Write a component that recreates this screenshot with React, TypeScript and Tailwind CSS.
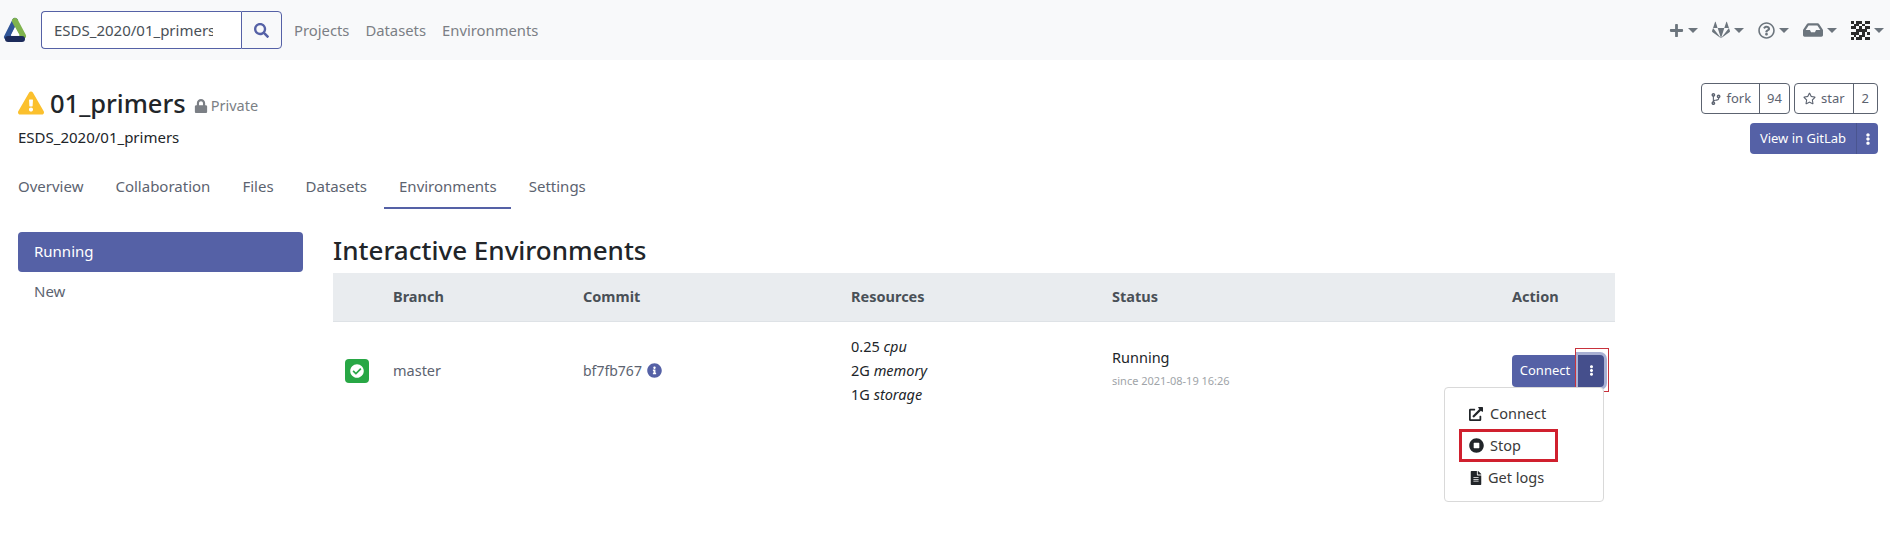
import React from 'react';
import {
  FaSearch, FaLock, FaExclamationTriangle, FaCodeBranch, FaRegStar, FaEllipsisV, FaCheckCircle,
  FaInfoCircle, FaExternalLinkAlt, FaStopCircle, FaFileAlt, FaPlus, FaGitlab, FaRegQuestionCircle, FaInbox,
} from 'react-icons/fa';

const Caret = () => (
  <span className="ml-[4px] inline-block h-0 w-0 border-x-[5px] border-t-[5px] border-x-transparent border-t-[#6c757d]" />
);

const Logo = () => (
  <svg width="24" height="28" viewBox="0 0 24 28" fill="none" strokeLinecap="round" strokeWidth="6">
    <path d="M12 5 L4 21" stroke="#2f5597" />
    <path d="M12 5 L20 20" stroke="#7fb34d" />
    <path d="M5 23 L19 23" stroke="#1c2b5a" />
    <path d="M12 11 L16.5 19 L8 19 Z" fill="#ffffff" strokeWidth="0" />
  </svg>
);

const Identicon = () => {
  const cells = ['1011011', '0110100', '1101011', '0011110', '1110101', '0101100', '1011011'];
  return (
    <svg width="19" height="19" viewBox="0 0 7 7" shapeRendering="crispEdges">
      {cells.map((row, y) =>
        row.split('').map((c, x) => c === '1' && <rect key={`${x}-${y}`} x={x} y={y} width="1" height="1" fill="#2b2b2b" />)
      )}
    </svg>
  );
};

const tabs = ['Overview', 'Collaboration', 'Files', 'Datasets', 'Environments', 'Settings'];

export default function App() {
  return (
    <div className="h-[544px] w-[1890px] overflow-hidden bg-white font-['Noto_Sans',sans-serif] text-[15px] text-[#212529]">
      <nav className="flex h-[60px] items-center bg-[#f8f9fa] pl-[3px] pr-[6px]">
        <Logo />
        <div className="ml-[14px] flex h-[38px] w-[200px] items-center overflow-hidden rounded-l-[4px] border border-r-0 border-[#5561a6] bg-white pl-[12px] text-[#495057]">
          <span className="w-[159px] overflow-hidden whitespace-nowrap">ESDS_2020/01_primers</span>
        </div>
        <div className="flex h-[38px] w-[41px] items-center justify-center rounded-r-[4px] border border-[#5561a6] text-[#5561a6]">
          <FaSearch size={15} />
        </div>
        <div className="ml-[12px] flex gap-[16px] text-[14.8px] text-[#7b7f85]">
          <span>Projects</span>
          <span>Datasets</span>
          <span>Environments</span>
        </div>
        <div className="ml-auto flex items-center gap-[14px] text-[#6c757d]">
          <span className="flex items-center"><FaPlus size={15} /><Caret /></span>
          <span className="flex items-center"><FaGitlab size={18} /><Caret /></span>
          <span className="flex items-center"><FaRegQuestionCircle size={17} /><Caret /></span>
          <span className="flex items-center"><FaInbox size={20} /><Caret /></span>
          <span className="flex items-center"><Identicon /><Caret /></span>
        </div>
      </nav>

      <header className="flex justify-between pl-[18px] pr-[12px] pt-[25px]">
        <div>
          <div className="flex items-center">
            <FaExclamationTriangle size={26} className="text-[#fbc02d]" />
            <h1 className="ml-[6px] text-[25.5px] leading-[36px] font-medium">01_primers</h1>
            <FaLock size={14} className="ml-[8px] mt-[6px] text-[#7b7f85]" />
            <span className="ml-[3px] mt-[6px] text-[14.5px] text-[#7b7f85]">Private</span>
          </div>
          <p className="mt-[5px] text-[15px]">ESDS_2020/01_primers</p>
        </div>
        <div className="-mt-[2px] flex flex-col items-end gap-[9px]">
          <div className="flex gap-[4px] text-[13px] text-[#5c6370]">
            <div className="flex h-[31px] items-center rounded-[4px] border border-[#5c6370]">
              <span className="flex items-center gap-[4px] px-[8px]"><FaCodeBranch size={12} />fork</span>
              <span className="flex h-full items-center border-l border-[#5c6370] px-[7px]">94</span>
            </div>
            <div className="flex h-[31px] items-center rounded-[4px] border border-[#5c6370]">
              <span className="flex items-center gap-[5px] px-[8px]"><FaRegStar size={13} />star</span>
              <span className="flex h-full items-center border-l border-[#5c6370] px-[8px]">2</span>
            </div>
          </div>
          <div className="flex h-[31px] rounded-[4px] bg-[#5561a6] text-[13px] text-white">
            <span className="flex w-[107px] items-center justify-center border-r border-[#4a558f]">View in GitLab</span>
            <span className="flex w-[21px] items-center justify-center"><FaEllipsisV size={12} /></span>
          </div>
        </div>
      </header>

      <div className="mt-[13px] flex gap-[32px] pl-[18px] text-[15px] text-[#5c6370]">
        {tabs.map((t) => (
          <span key={t} className={`pb-[11px] pt-[8px] ${t === 'Environments' ? 'relative' : ''}`}>
            {t}
            {t === 'Environments' && <span className="absolute -left-[15px] -right-[14px] bottom-0 h-[2px] bg-[#5561a6]" />}
          </span>
        ))}
      </div>

      <div className="mt-[23px] flex">
        <aside className="ml-[18px] w-[285px]">
          <div className="flex h-[40px] items-center rounded-[4px] bg-[#5561a6] pl-[16px] text-white">Running</div>
          <div className="flex h-[40px] items-center pl-[16px] text-[#5c6370]">New</div>
        </aside>
        <main className="ml-[30px] w-[1282px]">
          <h2 className="-mt-[3px] mb-[2px] text-[26px] leading-[42px] font-medium">Interactive Environments</h2>
          <div className="grid h-[49px] grid-cols-[60px_190px_268px_261px_400px_1fr] items-center border-b border-[#dee2e6] bg-[#e9ecef] pt-[1px] text-[14.5px] font-bold text-[#495057]">
            <span />
            <span>Branch</span>
            <span>Commit</span>
            <span>Resources</span>
            <span>Status</span>
            <span>Action</span>
          </div>
          <div className="grid grid-cols-[60px_190px_268px_261px_400px_1fr] items-center pt-[13px] text-[14.5px]">
            <span className="pl-[12px]">
              <span className="flex h-[24px] w-[24px] items-center justify-center rounded-[4px] bg-[#28a745] text-white">
                <FaCheckCircle size={14} />
              </span>
            </span>
            <span className="text-[#5c6370]">master</span>
            <span className="flex items-center gap-[5px] text-[14px] text-[#5c6370]">bf7fb767 <FaInfoCircle size={15} className="text-[#5561a6]" /></span>
            <div className="-translate-y-[1px] leading-[24px]">
              <div>0.25 <em>cpu</em></div>
              <div>2G <em>memory</em></div>
              <div>1G <em>storage</em></div>
            </div>
            <div className="-translate-y-[2px]">
              <div>Running</div>
              <div className="mt-[4px] text-[11px] text-[#a0a4a8]">since 2021-08-19 16:26</div>
            </div>
            <div className="relative flex h-[32px] w-[92px] text-[13px] text-white">
              <span className="flex w-[66px] items-center justify-center rounded-l-[4px] bg-[#5561a6]">Connect</span>
              <span className="flex w-[26px] items-center justify-center rounded-r-[4px] bg-[#454f8c] ring-[3px] ring-[#a9b0d3]"><FaEllipsisV size={11} /></span>
              <span className="absolute left-[63px] top-[-7px] h-[44px] w-[34px] border border-[#c8323c]" />
              <div className="absolute left-[-68px] top-[32px] flex h-[115px] w-[160px] flex-col rounded-[4px] border border-[#d9d9d9] bg-white pl-[24px] pt-[10px] text-[14.5px] text-[#3a3a3a]">
                <span className="flex h-[32px] items-center gap-[7px]"><FaExternalLinkAlt size={14} className="text-[#212529]" />Connect</span>
                <span className="relative flex h-[32px] items-center gap-[6px]">
                  <FaStopCircle size={15} className="text-[#212529]" />Stop
                  <span className="absolute -left-[10px] top-[-1px] h-[33px] w-[99px] border-[3px] border-[#d0202e]" />
                </span>
                <span className="flex h-[32px] items-center gap-[5px]"><FaFileAlt size={14} className="text-[#212529]" />Get logs</span>
              </div>
            </div>
          </div>
        </main>
      </div>
    </div>
  );
}
